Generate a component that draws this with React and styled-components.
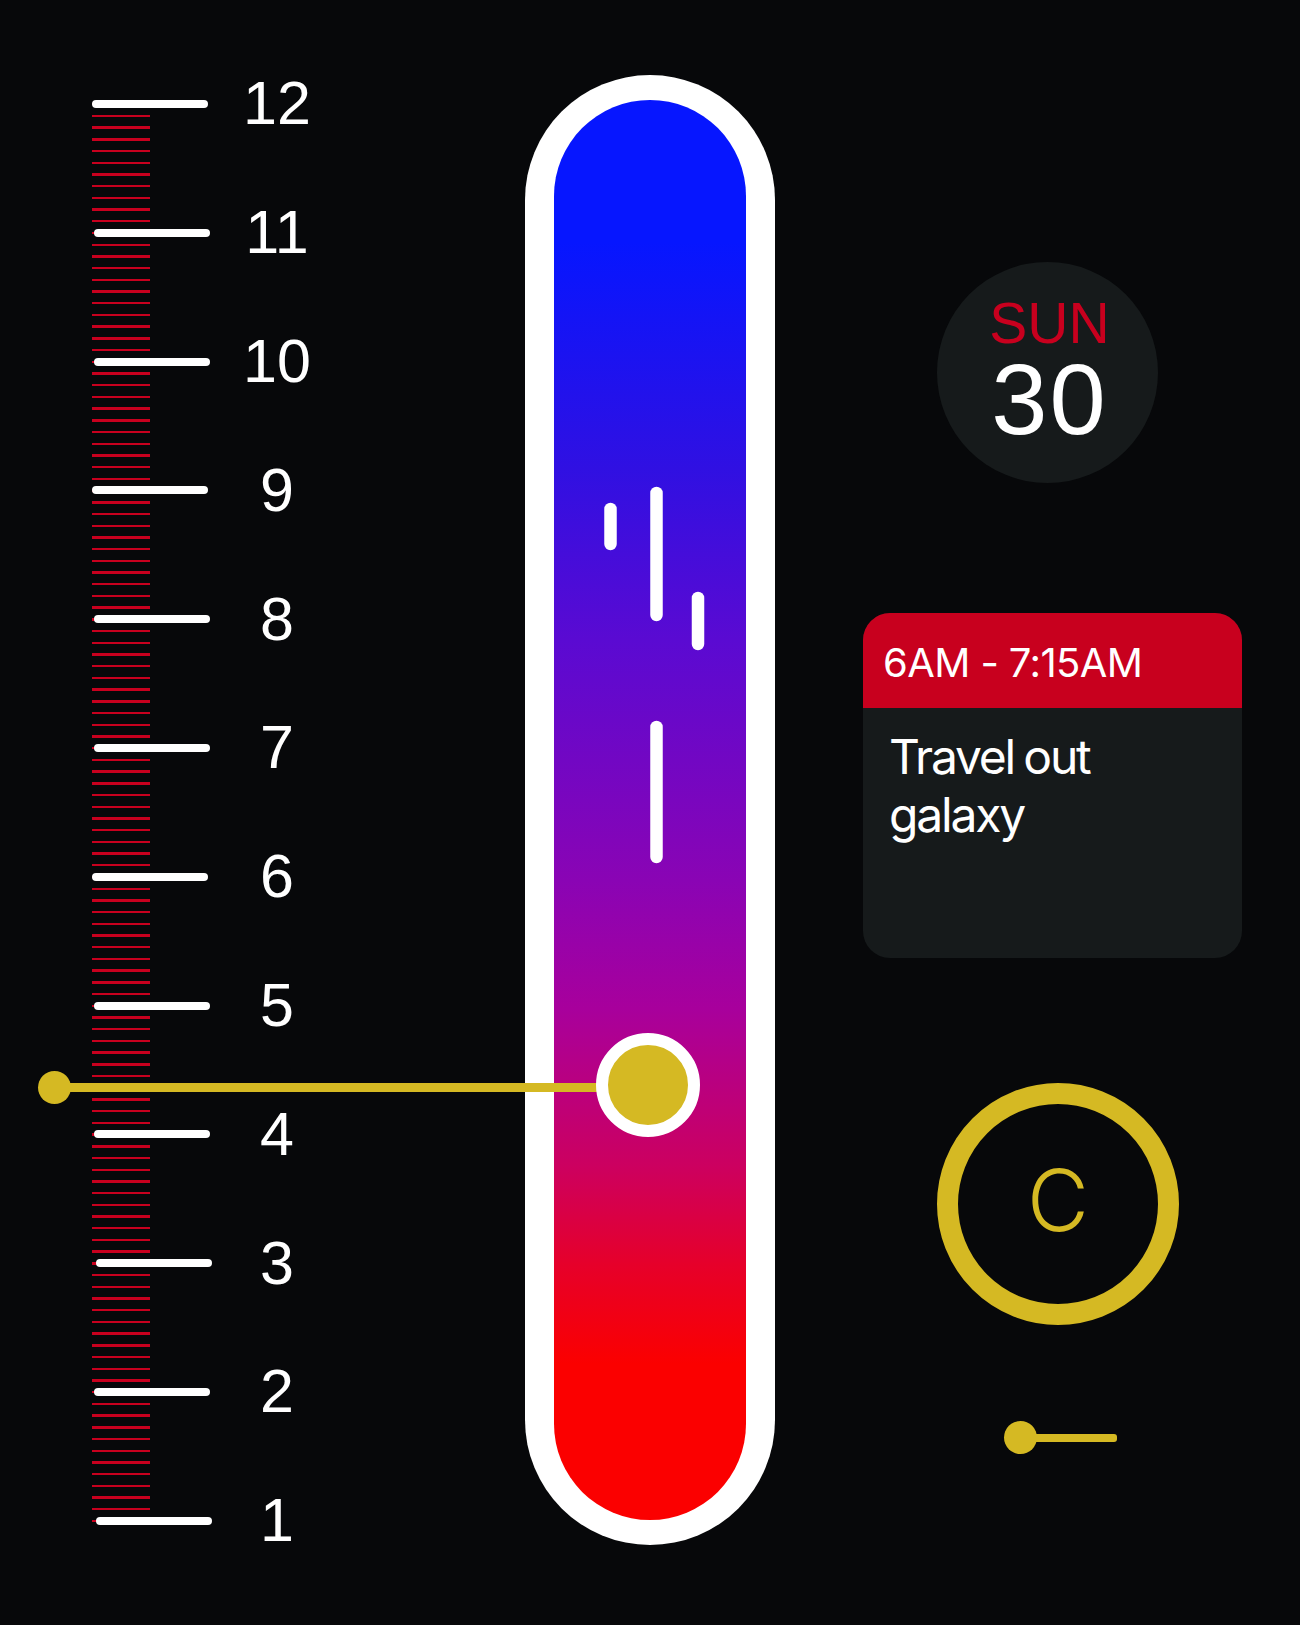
import React from 'react'
import styled, { createGlobalStyle } from 'styled-components'

const YELLOW = '#d5b923'
const RED = '#c8001e'
const PANEL = '#161a1b'

const GlobalStyle = createGlobalStyle`
  html, body {
    margin: 0;
    padding: 0;
    background: #07080a;
  }
`

// hour ticks, top to bottom, with the small sideways drift each one has
const HOURS = [
    { n: 12, shift: 0 },
    { n: 11, shift: 2 },
    { n: 10, shift: 2 },
    { n: 9, shift: 0 },
    { n: 8, shift: 2 },
    { n: 7, shift: 2 },
    { n: 6, shift: 0 },
    { n: 5, shift: 2 },
    { n: 4, shift: 2 },
    { n: 3, shift: 4 },
    { n: 2, shift: 2 },
    { n: 1, shift: 4 },
]

function App() {
    return (
        <>
            <GlobalStyle />
            <Page>
                <Pointer>
                    <PointerDot />
                    <PointerLine />
                </Pointer>

                <Ruler>
                    {HOURS.map((h) => (
                        <HourRow key={h.n}>
                            <Tick shift={h.shift} />
                            <HourLabel>{h.n}</HourLabel>
                        </HourRow>
                    ))}
                </Ruler>

                <Thermo>
                    <Tube>
                        <Streaks width="192" height="1420" viewBox="0 0 192 1420">
                            <line x1="56.5" y1="409" x2="56.5" y2="444" />
                            <line x1="102.5" y1="393" x2="102.5" y2="515" />
                            <line x1="144" y1="498" x2="144" y2="544" />
                            <line x1="102.5" y1="627" x2="102.5" y2="757" />
                        </Streaks>
                        <Knob />
                    </Tube>
                </Thermo>

                <Side>
                    <DateBadge>
                        <Weekday>SUN</Weekday>
                        <DayNum>30</DayNum>
                    </DateBadge>

                    <EventCard>
                        <EventTime>6AM - 7:15AM</EventTime>
                        <EventTitle>Travel out<br />galaxy</EventTitle>
                    </EventCard>

                    <UnitRing>C</UnitRing>

                    <MiniSlider>
                        <MiniDot />
                        <MiniLine />
                    </MiniSlider>
                </Side>
            </Page>
        </>
    )
}

const Page = styled.div`
  position: relative;
  width: 1300px;
  height: 1625px;
  overflow: hidden;
  display: flex;
  align-items: flex-start;
  background: #07080a;
  font-family: "Liberation Sans", Arial, sans-serif;
  color: #fff;
`

const Pointer = styled.div`
  position: absolute;
  left: 37.5px;
  top: 1070.5px;
  z-index: 1;
  display: flex;
  align-items: center;
`

const PointerDot = styled.div`
  width: 33px;
  height: 33px;
  border-radius: 50%;
  background: ${YELLOW};
`

const PointerLine = styled.div`
  width: 560px;
  height: 9px;
  margin-left: -2px;
  background: ${YELLOW};
`

const Ruler = styled.div`
  margin-left: 92px;
  margin-top: 39.6px;
  width: 250px;
  display: flex;
  flex-direction: column;
  background-image: repeating-linear-gradient(
    to bottom,
    ${RED} 0,
    ${RED} 2.4px,
    transparent 2.4px,
    transparent 11.709px
  );
  background-repeat: no-repeat;
  background-size: 58px 1420px;
  background-position: 0 63.2px;
`

const HourRow = styled.div`
  height: 128.8px;
  display: grid;
  grid-template-columns: 120px 130px;
  align-items: center;
`

const Tick = styled.div`
  width: 116px;
  height: 8px;
  border-radius: 4px;
  margin-left: ${(p) => p.shift}px;
  background: #fff;
`

const HourLabel = styled.div`
  text-align: center;
  font-size: 61px;
  line-height: 1;
  color: #fff;
`

const Thermo = styled.div`
  margin-left: 183px;
  margin-top: 75px;
  width: 250px;
  height: 1470px;
  box-sizing: border-box;
  padding: 25px 29px;
  border-radius: 125px;
  background: #fff;
`

const Tube = styled.div`
  position: relative;
  width: 192px;
  height: 1420px;
  border-radius: 96px;
  background: linear-gradient(
    to bottom,
    #0616ff 0%,
    #0616ff 10%,
    #3010e2 26%,
    #5a0ad2 38%,
    #8a04b4 55%,
    #a8009c 64%,
    #cc0060 75%,
    #e6002a 82%,
    #fb0000 89%,
    #fb0000 100%
  );
`

const Streaks = styled.svg`
  position: absolute;
  left: 0;
  top: 0;

  line {
    stroke: #fff;
    stroke-width: 12.5;
    stroke-linecap: round;
  }
`

const Knob = styled.div`
  position: absolute;
  left: 42px;
  top: 933px;
  z-index: 2;
  box-sizing: border-box;
  width: 104px;
  height: 104px;
  border-radius: 50%;
  border: 12px solid #fff;
  background: ${YELLOW};
`

const Side = styled.div`
  margin-left: 88px;
  margin-top: 262px;
  width: 379px;
  display: flex;
  flex-direction: column;
  align-items: flex-start;
`

const DateBadge = styled.div`
  margin-left: 74px;
  width: 221px;
  height: 221px;
  border-radius: 50%;
  background: ${PANEL};
  display: flex;
  flex-direction: column;
  align-items: center;
  justify-content: center;
  padding-left: 4px;
  box-sizing: border-box;
`

const Weekday = styled.div`
  font-size: 57px;
  line-height: 52px;
  color: ${RED};
`

const DayNum = styled.div`
  font-size: 101px;
  line-height: 100px;
  letter-spacing: 2px;
  color: #fff;
`

const EventCard = styled.div`
  margin-top: 130px;
  align-self: stretch;
  height: 345px;
  border-radius: 27px;
  overflow: hidden;
  background: ${PANEL};
  font-family: Inter, "Liberation Sans", sans-serif;
`

const EventTime = styled.div`
  box-sizing: border-box;
  height: 95px;
  padding: 4px 0 0 20px;
  line-height: 91px;
  font-size: 40px;
  letter-spacing: -0.6px;
  color: #fff;
  background: ${RED};
`

const EventTitle = styled.div`
  padding: 20px 0 0 26px;
  font-size: 48px;
  line-height: 58px;
  letter-spacing: -2.2px;
  word-spacing: -2px;
  color: #fff;
`

const UnitRing = styled.div`
  margin-top: 125px;
  margin-left: 74px;
  box-sizing: border-box;
  width: 242px;
  height: 242px;
  border-radius: 50%;
  border: 21px solid ${YELLOW};
  display: flex;
  align-items: center;
  justify-content: center;
  padding-bottom: 8px;
  font-family: Inter, "Liberation Sans", sans-serif;
  font-weight: 300;
  font-size: 85px;
  color: ${YELLOW};
`

const MiniSlider = styled.div`
  margin-top: 96px;
  margin-left: 141px;
  display: flex;
  align-items: center;
`

const MiniDot = styled.div`
  width: 33px;
  height: 33px;
  border-radius: 50%;
  background: ${YELLOW};
`

const MiniLine = styled.div`
  width: 82px;
  height: 8px;
  margin-left: -2px;
  border-radius: 0 3px 3px 0;
  background: ${YELLOW};
`

export default App
